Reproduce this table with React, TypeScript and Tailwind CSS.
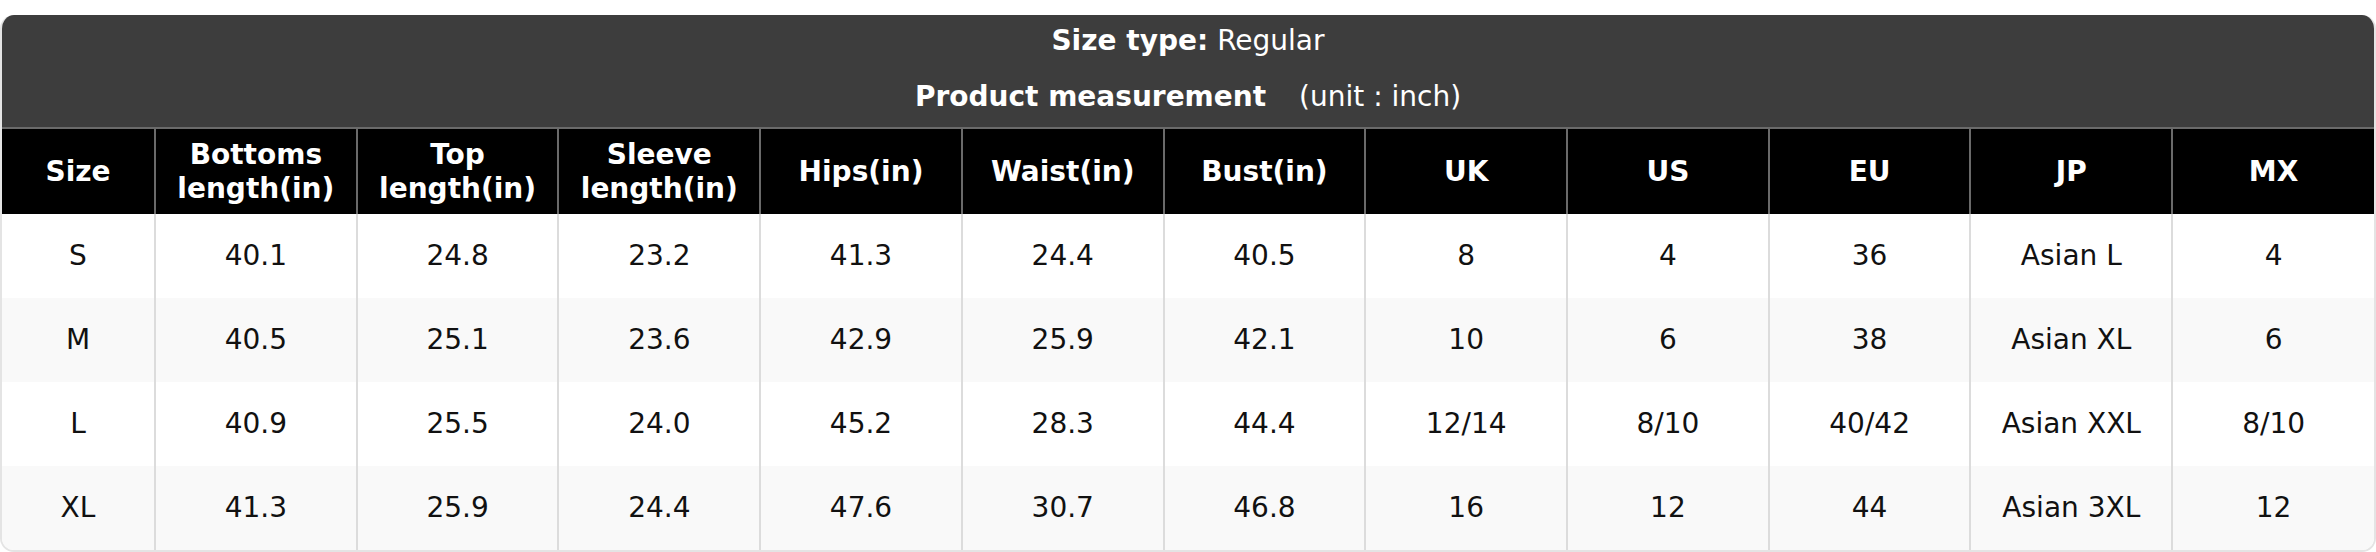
import React from "react";

const columns = [
  ["Size"],
  ["Bottoms", "length(in)"],
  ["Top", "length(in)"],
  ["Sleeve", "length(in)"],
  ["Hips(in)"],
  ["Waist(in)"],
  ["Bust(in)"],
  ["UK"],
  ["US"],
  ["EU"],
  ["JP"],
  ["MX"],
];

const rows = [
  ["S", "40.1", "24.8", "23.2", "41.3", "24.4", "40.5", "8", "4", "36", "Asian L", "4"],
  ["M", "40.5", "25.1", "23.6", "42.9", "25.9", "42.1", "10", "6", "38", "Asian XL", "6"],
  ["L", "40.9", "25.5", "24.0", "45.2", "28.3", "44.4", "12/14", "8/10", "40/42", "Asian XXL", "8/10"],
  ["XL", "41.3", "25.9", "24.4", "47.6", "30.7", "46.8", "16", "12", "44", "Asian 3XL", "12"],
];

export default function App() {
  return (
    <div
      className="w-[2376px] h-[552px] bg-white pt-[15px]"
      style={{ fontFamily: '"DejaVu Sans", Verdana, sans-serif' }}
    >
      <div className="rounded-[14px] overflow-hidden border-x-2 border-b-2 border-[#e4e4e4]">
        {/* Title block */}
        <div className="bg-[#3d3d3d] text-white text-[28px] text-center">
          <div className="h-[52px] flex items-center justify-center">
            <span className="font-bold">Size type:</span>
            <span className="ml-[9px]">Regular</span>
          </div>
          <div className="h-[60px] flex items-center justify-center">
            <span className="font-bold">Product measurement</span>
            <span className="ml-[33px]">(unit : inch)</span>
          </div>
        </div>

        <table className="w-full table-fixed border-collapse text-[28px]">
          <colgroup>
            <col className="w-[153px]" />
            {columns.slice(1).map((_, i) => (
              <col key={i} />
            ))}
          </colgroup>
          <thead>
            <tr className="bg-black text-white h-[86px] border-t-2 border-[#6a6a6a]">
              {columns.map((c, i) => (
                <th
                  key={i}
                  className={`font-bold leading-[1.18] px-1 ${i > 0 ? "border-l-2 border-[#6a6a6a]" : ""}`}
                >
                  {c.map((line, j) => (
                    <div key={j}>{line}</div>
                  ))}
                </th>
              ))}
            </tr>
          </thead>
          <tbody>
            {rows.map((r, ri) => (
              <tr key={ri} className={`h-[84px] ${ri % 2 === 1 ? "bg-[#f9f9f9]" : "bg-white"}`}>
                {r.map((v, ci) => (
                  <td
                    key={ci}
                    className={`text-center text-[#111] ${ci > 0 ? "border-l-2 border-[#dcdcdc]" : ""}`}
                  >
                    {v}
                  </td>
                ))}
              </tr>
            ))}
          </tbody>
        </table>
      </div>
    </div>
  );
}
